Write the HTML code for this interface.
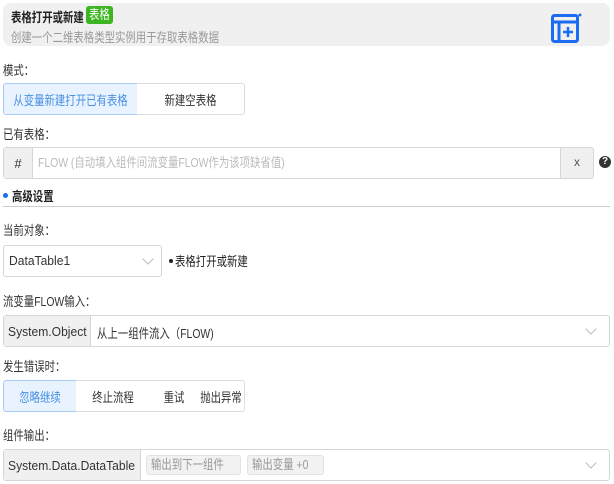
<!DOCTYPE html>
<html><head><meta charset="utf-8"><style>
*{box-sizing:border-box;margin:0;padding:0}
body{width:614px;height:484px;background:#fff;font-family:"Liberation Sans","Noto Sans CJK SC",sans-serif;font-size:13px;color:#333;position:relative;overflow:hidden;white-space:nowrap}
.a{position:absolute}
.s{display:inline-block;transform:scaleX(.8);transform-origin:left center}
.t{display:inline-block;transform:scaleX(.93);transform-origin:left center}
.c .s{transform-origin:center}
.hdr{left:3px;top:3px;width:607px;height:43px;background:#f0f0f0;border-radius:8px}
.lbl{left:3px;color:#333}
.btn{position:absolute;height:32px;border:1px solid #dcdcdc;background:#fff;display:flex;align-items:center;justify-content:center;color:#333}
.sel{border-color:#a8ccf5;background:#e9f3ff;color:#4a90e2}
.box{position:absolute;border:1px solid #d6d6d6;border-radius:3px;background:#fff;height:32px}
.pre{position:absolute;left:0;top:0;bottom:0;background:#f0f0f0;border-right:1px solid #d6d6d6;display:flex;align-items:center;padding-left:4px;color:#333}
.chev{position:absolute;width:8px;height:8px;border-right:1px solid #bbb;border-bottom:1px solid #bbb;transform:rotate(45deg)}
.tag{position:absolute;top:5px;height:20px;background:#f2f2f2;border:1px solid #e3e3e3;border-radius:3px;color:#999;line-height:18px;padding:0 4px}
</style></head><body>
<div class="a hdr"></div>
<div class="a" style="left:11px;top:7px;font-weight:bold;color:#222"><span class="s">表格打开或新建</span></div>
<div class="a" style="left:86px;top:6px;height:18px;width:27px;background:#3cb521;color:#fff;border-radius:3px;padding-left:3px;line-height:18px"><span class="s">表格</span></div>
<div class="a" style="left:11px;top:27px;color:#999"><span class="s">创建一个二维表格类型实例用于存取表格数据</span></div>
<svg class="a" style="left:550px;top:12px" width="34" height="32" viewBox="0 0 34 32"><rect x="2.5" y="3.5" width="25" height="26" rx="2" fill="none" stroke="#1a6cf0" stroke-width="3"/><line x1="2" y1="10" x2="28" y2="10" stroke="#1a6cf0" stroke-width="3"/><line x1="9" y1="10" x2="9" y2="30" stroke="#1a6cf0" stroke-width="3"/><line x1="13" y1="20" x2="23" y2="20" stroke="#1a6cf0" stroke-width="2.5"/><line x1="18" y1="15" x2="18" y2="25" stroke="#1a6cf0" stroke-width="2.5"/><circle cx="30" cy="3" r="1.5" fill="#1a6cf0"/></svg>

<div class="a lbl" style="top:60px"><span class="s">模式：</span></div>
<div class="btn sel c" style="left:3px;top:83px;width:135px;border-radius:3px 0 0 3px"><span class="s">从变量新建打开已有表格</span></div>
<div class="btn c" style="left:137px;top:83px;width:108px;border-radius:0 3px 3px 0;border-left:none"><span class="s">新建空表格</span></div>

<div class="a lbl" style="top:124px"><span class="s">已有表格：</span></div>
<div class="box" style="left:3px;top:147px;width:591px;background:#f0f0f0">
 <div class="pre" style="width:29px;justify-content:center;padding:0">#</div>
 <div class="a" style="left:29px;top:0;bottom:0;right:32px;background:#fff;border-right:1px solid #d6d6d6;color:#bbb;padding-left:5px;line-height:30px"><span class="s">FLOW (自动填入组件间流变量FLOW作为该项缺省值)</span></div>
 <div class="a" style="right:0;width:32px;top:0;bottom:0;text-align:center;line-height:29px;color:#555;font-size:12px">x</div>
</div>
<div class="a" style="left:599px;top:156px;width:12px;height:12px;border-radius:6px;background:#333;color:#fff;font-size:10px;font-weight:bold;text-align:center;line-height:12px">?</div>

<div class="a" style="left:3px;top:193px;width:5px;height:5px;border-radius:3px;background:#1a6cf0"></div>
<div class="a" style="left:12px;top:186px;font-weight:bold;color:#222"><span class="s">高级设置</span></div>
<div class="a" style="left:3px;top:206px;width:607px;height:1px;background:#ccc"></div>

<div class="a lbl" style="top:220px"><span class="s">当前对象：</span></div>
<div class="box" style="left:3px;top:245px;width:159px"><div class="a" style="left:5px;top:7px"><span class="t">DataTable1</span></div><div class="chev" style="left:140px;top:9px"></div></div>
<div class="a" style="left:169px;top:259px;width:4px;height:4px;border-radius:2px;background:#222"></div>
<div class="a" style="left:175px;top:251px;color:#222"><span class="s">表格打开或新建</span></div>

<div class="a lbl" style="top:291px"><span class="s">流变量FLOW输入：</span></div>
<div class="box" style="left:3px;top:315px;width:607px"><div class="pre" style="width:87px"><span class="t">System.Object</span></div><div class="a" style="left:93px;top:7px"><span class="s">从上一组件流入（FLOW)</span></div><div class="chev" style="left:583px;top:9px"></div></div>

<div class="a lbl" style="top:356px"><span class="s">发生错误时：</span></div>
<div class="btn sel c" style="left:3px;top:380px;width:74px;border-radius:3px 0 0 3px"><span class="s">忽略继续</span></div>
<div class="btn c" style="left:76px;top:380px;width:75px;border-left:none"><span class="s">终止流程</span></div>
<div class="btn c" style="left:150px;top:380px;width:49px;border-left:none"><span class="s">重试</span></div>
<div class="btn c" style="left:198px;top:380px;width:47px;border-left:none;border-radius:0 3px 3px 0"><span class="s">抛出异常</span></div>

<div class="a lbl" style="top:425px"><span class="s">组件输出：</span></div>
<div class="box" style="left:3px;top:449px;width:607px"><div class="pre" style="width:137px"><span class="t">System.Data.DataTable</span></div>
<div class="tag" style="left:142px;width:95px"><span class="s">输出到下一组件</span></div><div class="tag" style="left:243px;width:77px"><span class="s">输出变量 +0</span></div>
<div class="chev" style="left:583px;top:9px"></div></div>
</body></html>
